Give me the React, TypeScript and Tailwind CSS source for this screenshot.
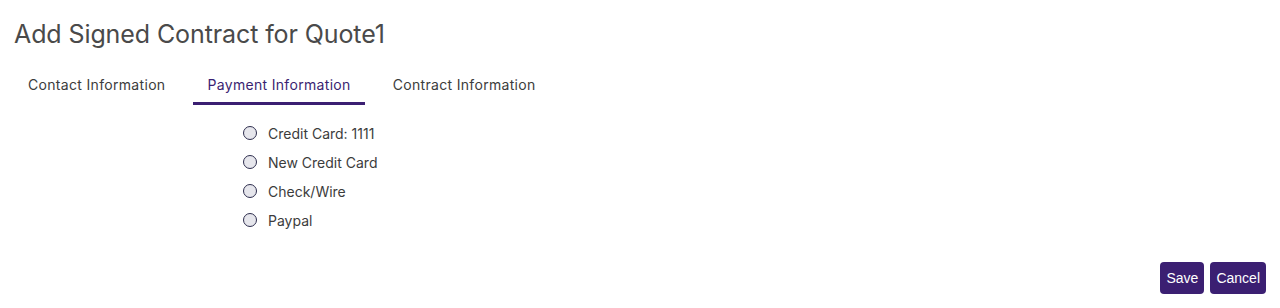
import React, { useState } from "react";

const options = ["Credit Card: 1111", "New Credit Card", "Check/Wire", "Paypal"];

export default function App() {
  const [tab] = useState(1);
  const tabs = ["Contact Information", "Payment Information", "Contract Information"];
  return (
    <div className="w-[1280px] h-[308px] bg-white flex flex-col" style={{ fontFamily: "Inter, 'Noto Sans', sans-serif" }}>
      <h1 className="pl-[14px] pt-[18px] text-[25px] leading-[32px] text-[#4a4a4a] font-normal tracking-[-0.1px]">
        Add Signed Contract for Quote1
      </h1>
      <div className="flex pl-[14px] mt-[21px] gap-[14px]">
        {tabs.map((t, i) => (
          <div
            key={t}
            className={`px-[14px] pt-[5px] pb-[8px] text-[14px] leading-[18px] tracking-[0.32px] border-b-[3px] ${
              i === tab ? "border-[#3b1f72] text-[#3b1f72]" : "border-transparent text-[#3c3c3c]"
            }`}
          >
            {t}
          </div>
        ))}
      </div>
      <div className="flex flex-col pl-[243px] pt-[19px] gap-[11px]">
        {options.map((o) => (
          <label key={o} className="flex items-center gap-[11px] h-[18px] text-[14px] text-[#3c3c3c]">
            <span className="w-[14px] h-[14px] rounded-full border-[1.5px] border-[#2e2e4e] bg-[#e6e6ec]" />
            {o}
          </label>
        ))}
      </div>
      <div className="flex-1" />
      <div className="flex justify-end gap-[6px] pr-[14px] pb-[14px]">
        <button className="h-[32px] px-[6px] rounded-[4px] bg-[#3b1f72] text-white text-[14px]" style={{ fontFamily: "'Liberation Sans', Arial, sans-serif" }}>
          Save
        </button>
        <button className="h-[32px] px-[6px] rounded-[4px] bg-[#3b1f72] text-white text-[14px]" style={{ fontFamily: "'Liberation Sans', Arial, sans-serif" }}>
          Cancel
        </button>
      </div>
    </div>
  );
}
